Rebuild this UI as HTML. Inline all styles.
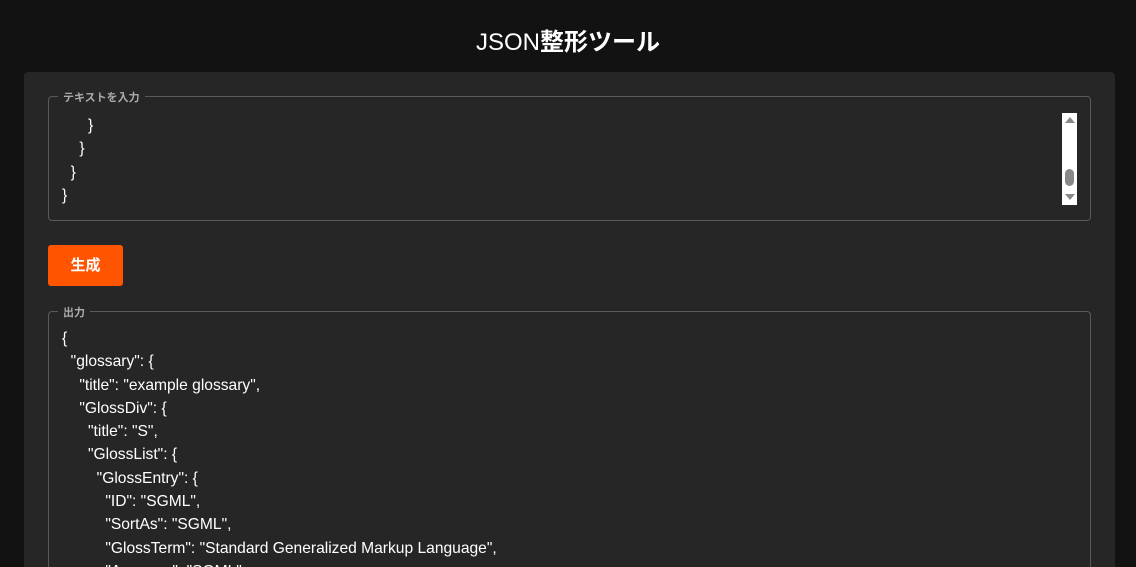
<!DOCTYPE html>
<html style="height:567px;overflow:hidden"><head><meta charset="utf-8"><style>
*{margin:0;padding:0;box-sizing:border-box}
body{width:1136px;height:567px;background:#121212;overflow:hidden;position:relative;font-family:"Liberation Sans","Noto Sans CJK JP",sans-serif;color:#fff}
h1{position:absolute;top:22px;left:0;width:1136px;text-align:center;font-size:24px;font-weight:normal;letter-spacing:0}
.panel{position:absolute;left:24px;top:72px;width:1091px;height:495px;background:#262626;border-radius:4px 4px 0 0;overflow:hidden}
.fs{position:absolute;border:1px solid #5a5a5a;border-radius:4px}
.lg{position:absolute;top:-8px;left:9px;padding:0 5px;background:#262626;font-size:11px;font-weight:bold;color:#aaa}
.code{position:absolute;font-size:15.6px;line-height:23.3px;white-space:pre;color:#fff}
.btn{position:absolute;left:24px;top:173px;width:75px;height:41px;background:#ff5500;border-radius:3px;font-weight:bold;font-size:15px;text-align:center;line-height:41px}
.sb{position:absolute;width:15px;height:92px;background:#fff}
</style></head><body>
<h1>JSON<b>整形ツール</b></h1>
<div class="panel">
 <div class="fs" style="left:24px;top:24px;width:1043px;height:125px">
  <div class="lg">テキストを入力</div>
  <div class="code" style="left:13px;top:17px">      }
    }
  }
}</div>
  <div class="sb" style="left:1013px;top:16px">
   <div style="position:absolute;left:3px;top:4px;border:5px solid transparent;border-top:0;border-bottom:6px solid #888;width:0"></div>
   <div style="position:absolute;left:3px;top:56px;width:9px;height:17px;border-radius:5px;background:#888"></div>
   <div style="position:absolute;left:3px;top:81px;border:5px solid transparent;border-bottom:0;border-top:6px solid #888;width:0"></div>
  </div>
 </div>
 <div class="btn">生成</div>
 <div class="fs" style="left:24px;top:239px;width:1043px;height:300px;overflow:visible">
  <div class="lg">出力</div>
  <div class="code" style="left:13px;top:15px;height:250px;overflow:hidden">{
  "glossary": {
    "title": "example glossary",
    "GlossDiv": {
      "title": "S",
      "GlossList": {
        "GlossEntry": {
          "ID": "SGML",
          "SortAs": "SGML",
          "GlossTerm": "Standard Generalized Markup Language",
          "Acronym": "SGML",</div>
 </div>
</div>
</body></html>
